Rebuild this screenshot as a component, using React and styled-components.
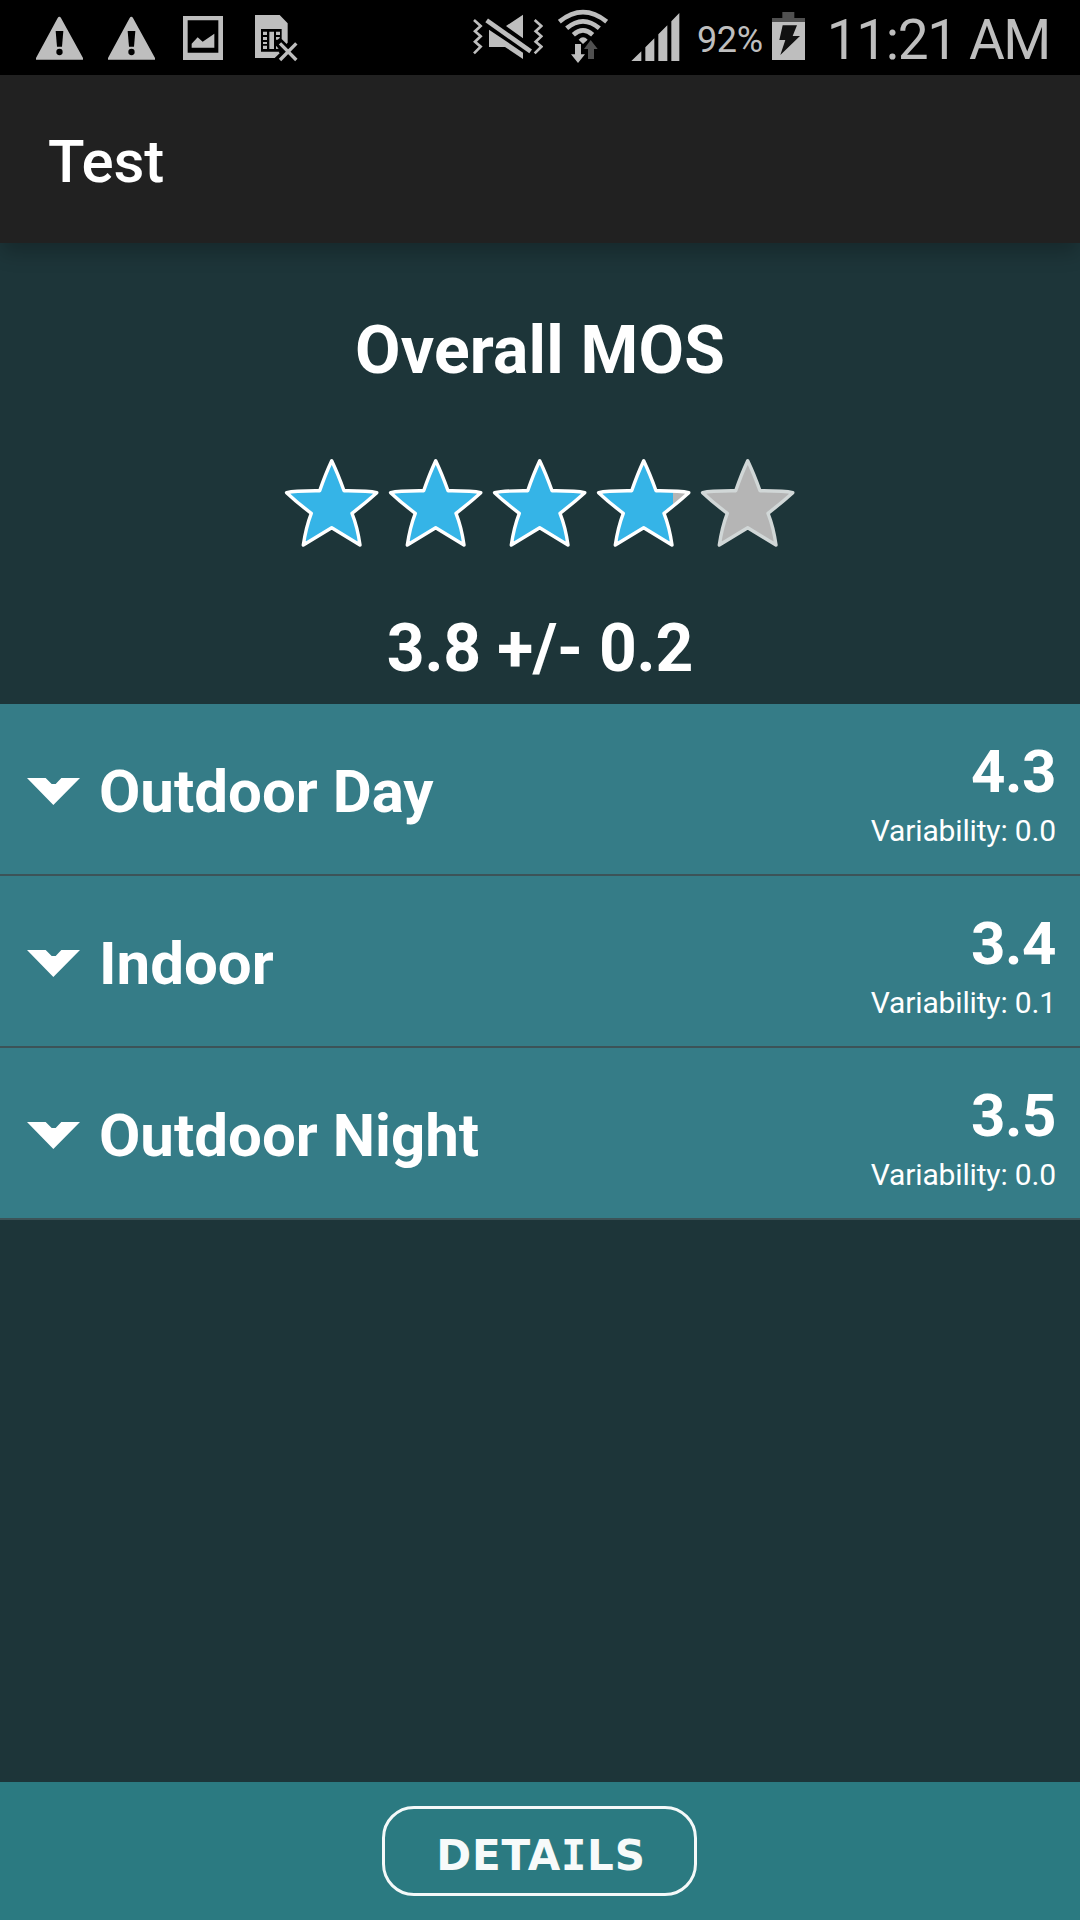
import React from "react";
import styled, { createGlobalStyle } from "styled-components";

const GlobalStyle = createGlobalStyle`
  * { box-sizing: border-box; }
  html, body { margin: 0; padding: 0; background: #1d3539; }
`;

const Screen = styled.div`
  display: flex;
  flex-direction: column;
  width: 1080px;
  height: 1920px;
  overflow: hidden;
  background: #1d3539;
  color: #fff;
  font-family: Roboto, "Liberation Sans", sans-serif;
`;

const StatusBar = styled.header`
  display: flex;
  justify-content: space-between;
  align-items: flex-start;
  flex: none;
  height: 75px;
  padding: 0 30px 0 36px;
  background: #000;
  color: #bebebe;
`;

const StatusGroup = styled.div`
  display: flex;
  height: 75px;
`;

const Glyph = styled.svg`
  display: block;
  flex: none;
  width: ${(p) => p.$w}px;
  height: 75px;
  margin-right: ${(p) => p.$gap || 0}px;
  fill: #bebebe;
`;

const BatteryText = styled.span`
  width: 75px;
  font-size: 36px;
  letter-spacing: -0.4px;
  line-height: 80px;
  white-space: nowrap;
`;

const Clock = styled.span`
  width: 230px;
  font-size: 55px;
  letter-spacing: -1.4px;
  line-height: 81px;
  text-align: right;
  white-space: nowrap;
`;

const AppBar = styled.div`
  position: relative;
  flex: none;
  height: 168px;
  padding: 5px 48px 0;
  background: #212121;
  box-shadow: 0 12px 18px -2px rgba(0, 0, 0, 0.22);
`;

const AppTitle = styled.h1`
  margin: 0;
  font-size: 60px;
  font-weight: 500;
  letter-spacing: -0.2px;
  line-height: 163px;
`;

const Summary = styled.section`
  display: flex;
  flex-direction: column;
  align-items: center;
  flex: none;
  height: 461px;
  padding-top: 68px;
`;

const Headline = styled.div`
  font-size: 66px;
  font-weight: 700;
  letter-spacing: ${(p) => p.$tracking}px;
  line-height: 80px;
  white-space: nowrap;
`;

const Stars = styled.div`
  display: flex;
  margin: 59px 0 55px;
`;

const StarBox = styled.svg`
  display: block;
  width: 104px;
  height: 104px;
`;

const List = styled.ul`
  flex: 1;
  margin: 0;
  padding: 0;
  list-style: none;
`;

const Row = styled.li`
  display: flex;
  justify-content: space-between;
  height: 172px;
  padding: 0 24px 0 27px;
  background: #357c87;
  border-bottom: 2px solid #3c5358;
`;

const RowLabel = styled.div`
  display: flex;
  font-size: 60px;
  font-weight: 700;
  line-height: 175px;
`;

const Arrow = styled.svg`
  width: 53px;
  height: 27px;
  margin: 74px 19px 0 0;
  fill: #fff;
`;

const Scores = styled.div`
  display: flex;
  flex-direction: column;
  align-items: flex-end;
  padding-top: 32px;
`;

const Score = styled.div`
  font-size: 60px;
  font-weight: 700;
  letter-spacing: -0.4px;
  line-height: 71px;
`;

const Variability = styled.div`
  font-size: 30px;
  letter-spacing: -0.15px;
  line-height: 48px;
`;

const Footer = styled.footer`
  display: flex;
  justify-content: center;
  flex: none;
  height: 138px;
  padding: 24px 1px 0 0;
  background: #2b7a81;
`;

const DetailsButton = styled.button`
  width: 315px;
  height: 90px;
  padding: 9px 0 0 3px;
  border: 3px solid #f4f9f9;
  border-radius: 32px;
  background: transparent;
  color: #f7fafa;
  font: 700 42px/74px "DejaVu Sans", sans-serif;
  letter-spacing: 0.8px;
`;

const SerifLetter = styled.span`
  font-family: "DejaVu Sans Mono", monospace;
`;

const STAR =
  "M51.7 10.8Q58 24 64 40.8Q88 40.6 96.8 42.7Q86 52.5 72 63.3Q77.5 77 80 95L51.7 77.8L23.3 95Q26 77 31.3 63.3Q17 52.5 6.6 42.7Q15 40.6 39.7 40.8Q45.500 24 51.7 10.8Z";

function Star({ fill }) {
  const clip = `star-${fill}`;
  return (
    <StarBox viewBox="0 0 104 104">
      <defs>
        <clipPath id={clip}>
          <rect x="0" y="0" width={fill} height="104" />
        </clipPath>
      </defs>
      <path d={STAR} fill="#b5b5b5" />
      <path d={STAR} fill="#35b4e7" clipPath={`url(#${clip})`} />
      <path
        d={STAR}
        fill="none"
        stroke={fill ? "#fff" : "#d1d7d7"}
        strokeWidth="3.4"
        strokeLinejoin="round"
      />
    </StarBox>
  );
}

function Warning({ gap }) {
  return (
    <Glyph $w={47} $gap={gap} viewBox="48 0 141 225">
      <path d="M118 50Q121 50 123 54L189 174V179H48V174L113 54Q115 50 118 50Z" />
      <path d="M107 93H130L126 140H111Z" fill="#000" />
      <circle cx="118.500" cy="156" r="9.500" fill="#000" />
    </Glyph>
  );
}

const rows = [
  { name: "Outdoor Day", score: "4.3", variability: "0.0" },
  { name: "Indoor", score: "3.4", variability: "0.1" },
  { name: "Outdoor Night", score: "3.5", variability: "0.0" },
];

export default function App() {
  return (
    <Screen>
      <GlobalStyle />
      <StatusBar>
        <StatusGroup>
          <Warning gap={25} />
          <Warning gap={28} />
          <Glyph $w={40} $gap={32} viewBox="489 0 120 225">
            <path d="M489 48H609V180H489ZM503 61V158H595V61Z" fillRule="evenodd" />
            <path d="M515 143V131L533 112L548 125L583 101V143Z" />
          </Glyph>
          <Glyph $w={43} viewBox="705 0 129 225">
            <path d="M705 45H779L803 70V128L776 156L779 160L764 174H705Z" />
            <path d="M723 87H785V117L803 135V155H723Z" fill="#000" />
            <path d="M729 95H741V105H729ZM729 111H741V120H729ZM729 126H741V132H729ZM729 137H741V147H729ZM748 95H762V147H748ZM768 95H780V105H768ZM768 111H778L780 113L773 119H768ZM768 137L776 146L768 147Z" />
            <path d="M780 130L829 180M829 130L780 180" stroke="#000" strokeWidth="20" />
            <path d="M780 130L829 180M829 130L780 180" stroke="#bebebe" strokeWidth="10" />
          </Glyph>
        </StatusGroup>
        <StatusGroup>
          <Glyph $w={70} $gap={15} viewBox="39 0 210 225">
            <path
              d="M42 60L62 78L45 94L62 109L45 125L62 140L42 160M224 60L244 78L227 94L244 109L227 125L244 140L224 160"
              fill="none"
              stroke="#bebebe"
              strokeWidth="8"
            />
            <path d="M189 44V115L138 78ZM87 89L189 158V177L135 141H87Z" />
            <path d="M80 61L212 154" stroke="#bebebe" strokeWidth="14" />
          </Glyph>
          <Glyph $w={50} $gap={23} viewBox="294 0 150 225">
            <g fill="none" stroke="#bebebe" strokeWidth="14">
              <path d="M298 65Q369 8 440 65" />
              <path d="M320 85Q369 43 418 85" />
              <path d="M340 104Q369 78 398 104" />
            </g>
            <path d="M356 119Q369 105 383 119L369 132Z" />
            <path d="M345 132H363V163H375L354 189L333 163H345Z" />
            <path d="M392 120L413 147H402V177H384V147H372Z" fill="#505050" />
          </Glyph>
          <Glyph $w={49} $gap={17} viewBox="512 0 147 225">
            <path d="M513 183L543 154V183ZM555 183V142L582 115V183ZM594 183V103L621 76V183ZM633 183V64L657 39V183Z" />
          </Glyph>
          <BatteryText>92%</BatteryText>
          <Glyph $w={33} $gap={15} viewBox="36 0 99 225">
            <path d="M36 66V54H67V36H103V54H135V66Z" fill="#505050" />
            <path d="M36 66H135V180H36Z" />
            <path d="M68 76H111L98 108H120L61 165L76 120H58Z" fill="#111" />
          </Glyph>
          <Clock>11:21 AM</Clock>
        </StatusGroup>
      </StatusBar>
      <AppBar>
        <AppTitle>Test</AppTitle>
      </AppBar>
      <Summary>
        <Headline $tracking={0.2}>Overall MOS</Headline>
        <Stars>
          {[104, 104, 104, 81, 0].map((fill, i) => (
            <Star key={i} fill={fill} />
          ))}
        </Stars>
        <Headline $tracking={-0.25}>3.8 +/- 0.2</Headline>
      </Summary>
      <List>
        {rows.map((row) => (
          <Row key={row.name}>
            <RowLabel>
              <Arrow viewBox="0 0 159 81">
                <path d="M0 0H56L74 18H86L103 0H159L79 81Z" />
              </Arrow>
              {row.name}
            </RowLabel>
            <Scores>
              <Score>{row.score}</Score>
              <Variability>Variability: {row.variability}</Variability>
            </Scores>
          </Row>
        ))}
      </List>
      <Footer>
        <DetailsButton>
          DETA<SerifLetter>I</SerifLetter>LS
        </DetailsButton>
      </Footer>
    </Screen>
  );
}
